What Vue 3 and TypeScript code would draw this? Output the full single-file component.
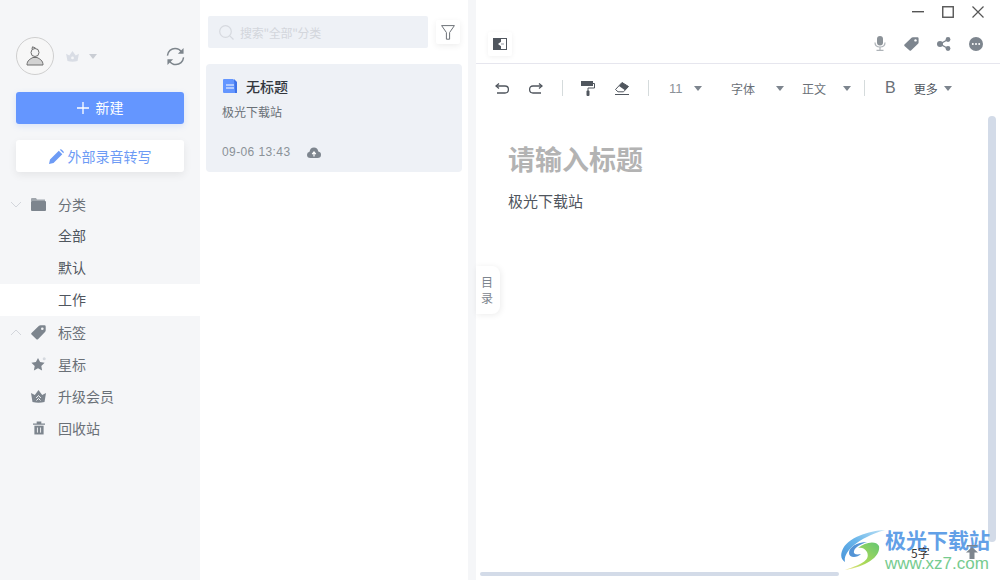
<script setup lang="ts">
// 笔记主界面：左侧分类、中间笔记列表、右侧编辑器
interface NavItem {
  label: string
  icon?: string
  arrow?: 'down' | 'up'
  active?: boolean
  child?: boolean
}

const navItems: NavItem[] = [
  { label: '分类', icon: 'folder', arrow: 'down' },
  { label: '全部', child: true },
  { label: '默认', child: true },
  { label: '工作', child: true, active: true },
  { label: '标签', icon: 'tag', arrow: 'up' },
  { label: '星标', icon: 'star' },
  { label: '升级会员', icon: 'crown' },
  { label: '回收站', icon: 'trash' },
]
</script>

<template>
  <div class="app">
    <aside class="sidebar">
      <div class="user-row">
        <div class="avatar">
          <svg width="18" height="20" viewBox="0 0 18 20">
            <circle cx="9" cy="6.5" r="4" fill="#f4f4f4" stroke="#6e6e6e" stroke-width="1" />
            <path d="M6 3 L6.5 0.8 L9.5 2" fill="none" stroke="#6e6e6e" stroke-width="1" />
            <path d="M1 19 C1 14.5 4 13 7 11.5 L11 11.5 C14 13 17 14.5 17 19 Z" fill="#d2d2d2" stroke="#6e6e6e" stroke-width="1" />
          </svg>
        </div>
        <svg class="vip" width="13" height="11" viewBox="0 0 14 12">
          <path d="M0 3 L3.5 5 L7 0 L10.5 5 L14 3 L12.5 11 Q7 12.5 1.5 11 Z" fill="#d9dde5" />
          <circle cx="7" cy="7.5" r="1.5" fill="#f5f6f8" />
        </svg>
        <span class="caret vip-caret"></span>
        <svg class="sync" width="19" height="19" viewBox="0 0 20 20" fill="none" stroke="#7d858c" stroke-width="1.5">
          <path d="M1.5 9 C2 4.5 5.5 1.5 9.5 1.5 C12.5 1.5 15 3 16.5 5.5" />
          <path d="M18.5 11 C18 15.5 14.5 18.5 10.5 18.5 C7.5 18.5 5 17 3.5 14.5" />
          <path d="M18.5 1 V7 H12.5 Z" fill="#7d858c" stroke="none" />
          <path d="M1.5 19 V13 H7.5 Z" fill="#7d858c" stroke="none" />
        </svg>
      </div>

      <button class="btn-new">
        <svg width="12" height="12" viewBox="0 0 12 12"><path d="M6 0 V12 M0 6 H12" stroke="#fff" stroke-width="1.3" /></svg>
        <span class="btn-new-label">新建</span>
      </button>
      <button class="btn-transcribe">
        <svg width="15" height="15" viewBox="0 0 15 15"><path d="M0 15 L1 10.5 L9.8 1.7 L13.3 5.2 L4.5 14 Z M10.8 0.7 Q11.8 -0.2 12.8 0.7 L14.3 2.2 Q15.2 3.2 14.3 4.2 Z" fill="#6d9bf5" /></svg>
        <span>外部录音转写</span>
      </button>

      <nav class="nav">
        <div v-for="item in navItems" :key="item.label" class="nav-row" :class="{ active: item.active, child: item.child }">
          <span class="nav-arrow">
            <svg v-if="item.arrow === 'down'" width="12" height="7" viewBox="0 0 12 7"><path d="M1 1 L6 6 L11 1" fill="none" stroke="#d3d6dc" /></svg>
            <svg v-if="item.arrow === 'up'" width="12" height="7" viewBox="0 0 12 7"><path d="M1 6 L6 1 L11 6" fill="none" stroke="#d3d6dc" /></svg>
          </span>
          <span class="nav-icon">
            <svg v-if="item.icon === 'folder'" width="15" height="13" viewBox="0 0 15 13">
              <path d="M0 1 Q0 0 1 0 H5 L6 1.5 H14 V3 H0 Z" fill="#a0a6ad" />
              <rect x="0" y="3" width="15" height="10" rx="1" fill="#7d858e" />
            </svg>
            <svg v-if="item.icon === 'tag'" width="15" height="15" viewBox="0 0 15 15">
              <path d="M0.5 8 L8 0.8 Q8.6 0.3 9.5 0.3 H13.5 Q14.7 0.3 14.7 1.5 V5.5 Q14.7 6.4 14 7 L7 14.2 Q6.2 15 5.4 14.2 L0.5 9.5 Q-0.2 8.8 0.5 8 Z" fill="#7d858e" />
              <circle cx="11.3" cy="3.7" r="1.3" fill="#f5f6f8" />
            </svg>
            <svg v-if="item.icon === 'star'" width="15" height="14" viewBox="0 0 15 14">
              <path d="M7 1 L9.1 5 L13.6 5.7 L10.3 8.9 L11.1 13.4 L7 11.2 L2.9 13.4 L3.7 8.9 L0.4 5.7 L4.9 5 Z" fill="#7d858e" />
              <circle cx="13.2" cy="1.8" r="1.5" fill="#d5d9df" />
            </svg>
            <svg v-if="item.icon === 'crown'" width="15" height="13" viewBox="0 0 15 13">
              <path d="M0 3 L3.8 5 L7.5 0 L11.2 5 L15 3 L13.5 12 Q7.5 13.5 1.5 12 Z" fill="#7d858e" />
              <path d="M5.2 8 L7.5 5.5 L9.8 8 M5.5 10.5 L7.5 8.5 L9.5 10.5" fill="none" stroke="#f5f6f8" />
            </svg>
            <svg v-if="item.icon === 'trash'" width="12" height="14" viewBox="0 0 13 14">
              <path d="M0 2 H13 V3.5 H0 Z M4 0 H9 V2 H4 Z" fill="#7d858e" />
              <path d="M1.5 4.5 H11.5 V14 H1.5 Z" fill="#7d858e" />
              <path d="M4.8 6.5 V12 M8.2 6.5 V12" stroke="#f5f6f8" stroke-width="1" />
            </svg>
          </span>
          <span class="nav-label">{{ item.label }}</span>
        </div>
      </nav>
    </aside>

    <section class="list">
      <div class="search-row">
        <div class="search">
          <svg width="15" height="15" viewBox="0 0 15 15" fill="none" stroke="#d6d9df" stroke-width="1.2">
            <circle cx="6.5" cy="6.5" r="5.8" />
            <path d="M10.8 10.8 L14.5 14.5" />
          </svg>
          <span>搜索"全部"分类</span>
        </div>
        <div class="filter">
          <svg width="14" height="15" viewBox="0 0 14 15"><path d="M0.6 0.6 H13.4 L8.6 7.5 V14.2 H5.4 V7.5 Z" fill="none" stroke="#6d7278" /></svg>
        </div>
      </div>
      <article class="card">
        <div class="card-title">
          <svg width="14" height="14" viewBox="0 0 14 14">
            <path d="M1 0 H10 L14 3.5 V14 H1 Q0 14 0 13 V1 Q0 0 1 0 Z" fill="#6496ff" />
            <path d="M11 0 L14 3 V14 H12 Z" fill="#3f73e8" />
            <path d="M3 6 H11 M3 9 H11" stroke="#fff" stroke-width="1" />
          </svg>
          <span>无标题</span>
        </div>
        <p class="card-text">极光下载站</p>
        <div class="card-foot">
          <span>09-06 13:43</span>
          <svg width="14" height="11" viewBox="0 0 14 11">
            <path d="M3.5 11 Q0 11 0 7.8 Q0 5.2 2.5 4.8 Q3.2 0.5 7 0.5 Q10.6 0.5 11.3 4.5 Q14 5 14 7.8 Q14 11 10.5 11 Z" fill="#7d858e" />
            <path d="M7 9.5 V6 M5.2 7.2 L7 5 L8.8 7.2" fill="none" stroke="#fff" stroke-width="1.2" />
          </svg>
        </div>
      </article>
    </section>

    <div class="gutter"></div>

    <main class="editor">
      <div class="win-bar">
        <svg width="12" height="2" viewBox="0 0 12 2"><rect width="12" height="1.4" fill="#555" /></svg>
        <svg width="12" height="12" viewBox="0 0 12 12"><rect x="0.75" y="0.75" width="10.5" height="10.5" fill="none" stroke="#555" stroke-width="1.4" /></svg>
        <svg width="12" height="12" viewBox="0 0 12 12"><path d="M0.5 0.5 L11.5 11.5 M11.5 0.5 L0.5 11.5" stroke="#555" stroke-width="1.2" /></svg>
      </div>
      <div class="action-bar">
        <div class="collapse">
          <svg width="14" height="12" viewBox="0 0 14 12">
            <rect x="0.5" y="0.5" width="13" height="11" fill="#fff" stroke="#50565e" />
            <rect width="8" height="12" fill="#50565e" />
            <path d="M5 6 L9 3 V9 Z" fill="#fff" />
            <rect x="8" y="5" width="3" height="2" fill="#c9ccd0" />
          </svg>
        </div>
        <div class="actions">
          <svg width="12" height="15" viewBox="0 0 12 15">
            <rect x="3" y="0" width="6" height="9.5" rx="3" fill="#8b9298" />
            <path d="M1 6.5 Q1 11 6 11 Q11 11 11 6.5 M6 11 V14 M2.5 14.4 H9.5" fill="none" stroke="#aeb3b8" stroke-width="1.2" />
          </svg>
          <svg width="15" height="14" viewBox="0 0 15 14">
            <path d="M0.5 7.5 L7.5 0.8 Q8 0.3 8.8 0.3 H13.5 Q14.6 0.3 14.6 1.4 V5.5 Q14.6 6.3 14 6.8 L7 13.4 Q6.3 14 5.6 13.4 L0.5 8.9 Q-0.1 8.2 0.5 7.5 Z" fill="#7d858e" />
            <circle cx="11.5" cy="3.4" r="1.2" fill="#fff" />
          </svg>
          <svg width="14" height="14" viewBox="0 0 14 14">
            <path d="M11 2.5 L3 7 L11 11.5" fill="none" stroke="#7d858e" stroke-width="1.4" />
            <circle cx="3" cy="7" r="3" fill="#7d858e" />
            <circle cx="11" cy="2.5" r="2.4" fill="#7d858e" />
            <circle cx="11" cy="11.5" r="2.4" fill="#7d858e" />
          </svg>
          <svg width="14" height="14" viewBox="0 0 14 14">
            <circle cx="7" cy="7" r="7" fill="#7d858e" />
            <circle cx="3.8" cy="7" r="1" fill="#fff" />
            <circle cx="7" cy="7" r="1" fill="#fff" />
            <circle cx="10.2" cy="7" r="1" fill="#fff" />
          </svg>
        </div>
      </div>

      <div class="toolbar">
        <svg class="t-undo" width="14" height="11" viewBox="0 0 14 11" fill="none" stroke="#50565e" stroke-width="1.3">
          <path d="M1 3 H10 Q13.4 3 13.4 6.5 Q13.4 10 10 10 H2" />
          <path d="M4 0.5 L1 3 L4 5.5" />
        </svg>
        <svg class="t-redo" width="14" height="11" viewBox="0 0 14 11" fill="none" stroke="#50565e" stroke-width="1.3">
          <path d="M13 3 H4 Q0.6 3 0.6 6.5 Q0.6 10 4 10 H12" />
          <path d="M10 0.5 L13 3 L10 5.5" />
        </svg>
        <i class="sep sep-a"></i>
        <svg class="t-roller" width="14" height="15" viewBox="0 0 14 15">
          <rect x="0" y="0" width="12" height="5" fill="#50565e" />
          <path d="M12 2.5 H13.5 V7 H7 V10" fill="none" stroke="#50565e" />
          <rect x="5.5" y="9.5" width="3" height="5.5" rx="1" fill="#50565e" />
        </svg>
        <svg class="t-eraser" width="14" height="14" viewBox="0 0 14 14">
          <path d="M0.5 8.5 L7 1.5 L13.5 5.5 L8.5 10.8 H3 Z" fill="#fff" stroke="#50565e" />
          <path d="M4 5 L7 1.5 L13.5 5.5 L10 9.2 Z" fill="#50565e" />
          <rect y="13" width="14" height="1" fill="#50565e" />
        </svg>
        <i class="sep sep-b"></i>
        <span class="t-text t-size">11</span><span class="caret c-size"></span>
        <span class="t-text t-font">字体</span><span class="caret c-font"></span>
        <span class="t-text t-style">正文</span><span class="caret c-style"></span>
        <i class="sep sep-c"></i>
        <span class="t-bold">B</span>
        <span class="t-text t-more">更多</span><span class="caret c-more"></span>
      </div>

      <div class="doc">
        <h1>请输入标题</h1>
        <p>极光下载站</p>
      </div>

      <div class="toc">目<br />录</div>
      <div class="scroll-v"></div>
      <div class="scroll-h"></div>
      <div class="count">5字</div>
      <svg class="to-top" width="12" height="14" viewBox="0 0 12 14"><path d="M1 0 H11 V1.4 H1 Z M6 2 L12 7.5 H8.5 V14 H3.5 V7.5 H0 Z" fill="#7d858e" /></svg>
    </main>

    <div class="watermark">
      <svg width="46" height="42" viewBox="0 0 46 42">
        <defs>
          <linearGradient id="wm-blue" x1="1" y1="0" x2="0" y2="1">
            <stop offset="0" stop-color="#b9dff5" />
            <stop offset="0.5" stop-color="#62b3ea" />
            <stop offset="1" stop-color="#3f8fd8" />
          </linearGradient>
          <linearGradient id="wm-green" x1="1" y1="0" x2="0" y2="1">
            <stop offset="0" stop-color="#5cc46c" />
            <stop offset="0.6" stop-color="#a8d84f" />
            <stop offset="1" stop-color="#f1e68a" />
          </linearGradient>
        </defs>
        <path d="M44 1 C28 2 6 8 1 22 C-1 28 1 31 4 33 C2 24 14 10 44 1 Z" fill="url(#wm-blue)" />
        <path d="M26 13 C16 13 8 18 8 24 C8 29 16 29 20 25 C15 26 12 25 13 22 C14 18 20 15 26 13 Z" fill="#4a8fd4" />
        <path d="M38 17 C40 28 24 38 4 41 C18 36 30 32 26 23 C24 19 20 18 17 19 C24 13 35 11 38 17 Z" fill="url(#wm-green)" />
      </svg>
      <div class="wm-text">
        <div class="wm-cn">极光下载站</div>
        <div class="wm-url">www.xz7.com</div>
      </div>
    </div>
  </div>
</template>

<style>
body {
  margin: 0;
  overflow: hidden;
}
</style>

<style scoped>
.app {
  position: relative;
  display: flex;
  width: 1000px;
  height: 580px;
  overflow: hidden;
  background: #fff;
  font-family: "Noto Sans CJK SC", "Liberation Sans", sans-serif;
  color: #50565e;
}

/* 左侧栏 */
.sidebar {
  width: 200px;
  flex: none;
  padding-top: 37px;
  box-sizing: border-box;
  background: #f5f6f8;
}

.user-row {
  display: flex;
  align-items: center;
  height: 38px;
  padding: 0 15px 0 16px;
}

.avatar {
  width: 38px;
  height: 38px;
  box-sizing: border-box;
  border: 1px solid #cfcfcf;
  border-radius: 50%;
  background: #f7f7f7;
  display: flex;
  align-items: center;
  justify-content: center;
}

.vip {
  margin-left: 12px;
}

.caret {
  display: inline-block;
  width: 0;
  height: 0;
  border-left: 4.5px solid transparent;
  border-right: 4.5px solid transparent;
  border-top: 5px solid #7d858e;
}

.vip-caret {
  margin-left: 10px;
  border-top-color: #c9cdd4;
}

.sync {
  margin-left: auto;
}

.btn-new,
.btn-transcribe {
  display: flex;
  align-items: center;
  justify-content: center;
  width: 168px;
  height: 32px;
  margin-left: 16px;
  border: none;
  border-radius: 3px;
  font: inherit;
  font-size: 14px;
}

.btn-new {
  gap: 7px;
  margin-top: 17px;
  color: #fff;
  background: #6496ff;
  box-shadow: 0 2px 6px rgba(100, 150, 255, 0.2);
}

.btn-new-label {
  padding-bottom: 2px;
}

.btn-transcribe {
  gap: 4px;
  margin-top: 16px;
  color: #6d9bf5;
  background: #fff;
  box-shadow: 0 3px 8px rgba(0, 0, 0, 0.07);
}

.nav {
  margin-top: 16px;
}

.nav-row {
  display: flex;
  align-items: center;
  height: 32px;
  font-size: 14px;
  color: #6a7077;
}

.nav-row.child {
  color: #50565e;
}

.nav-row.child .nav-label {
  padding-bottom: 2px;
}

.nav-row.active {
  background: #fff;
}

.nav-arrow {
  width: 12px;
  margin-left: 10px;
  display: flex;
}

.nav-icon {
  width: 15px;
  margin-left: 9px;
  margin-right: 12px;
  display: flex;
  justify-content: center;
}

/* 笔记列表 */
.list {
  width: 268px;
  flex: none;
  box-sizing: border-box;
  padding: 16px 6px 0;
}

.search-row {
  display: flex;
  align-items: center;
  gap: 8px;
  padding-left: 2px;
}

.search {
  display: flex;
  align-items: center;
  gap: 6px;
  width: 220px;
  height: 32px;
  box-sizing: border-box;
  padding-left: 11px;
  border-radius: 2px;
  background: #eef1f6;
  font-size: 12px;
  letter-spacing: -0.3px;
  color: #d3d6dc;
}

.filter {
  display: flex;
  align-items: center;
  justify-content: center;
  width: 24px;
  height: 24px;
  border-radius: 2px;
  background: #fff;
  box-shadow: 0 2px 6px rgba(0, 0, 0, 0.07);
}

.card {
  height: 108px;
  box-sizing: border-box;
  margin-top: 16px;
  padding: 13px 16px 0 17px;
  border-radius: 4px;
  background: #eef1f6;
}

.card-title {
  display: flex;
  align-items: center;
  gap: 9px;
  height: 18px;
  font-size: 14px;
  font-weight: 500;
  color: #33373d;
}

.card-text {
  margin: 8px 0 0 -1px;
  height: 18px;
  line-height: 18px;
  font-size: 12px;
  color: #6a7077;
}

.card-foot {
  display: flex;
  align-items: center;
  gap: 17px;
  margin: 22px 0 0 -1px;
  height: 18px;
  font-family: "Liberation Sans", sans-serif;
  font-size: 12px;
  letter-spacing: 0.4px;
  color: #8b9298;
}

.gutter {
  width: 8px;
  flex: none;
  background: #f5f6f8;
}

/* 编辑器 */
.editor {
  position: relative;
  flex: 1;
  min-width: 0;
}

.win-bar {
  display: flex;
  align-items: center;
  justify-content: flex-end;
  gap: 18px;
  height: 24px;
  padding-right: 16px;
}

.action-bar {
  display: flex;
  align-items: center;
  justify-content: space-between;
  height: 39px;
  padding: 0 17px 0 12px;
  border-bottom: 1px solid #e6e6ee;
}

.collapse {
  display: flex;
  align-items: center;
  justify-content: center;
  width: 24px;
  height: 24px;
  background: #fff;
  box-shadow: 0 1px 5px rgba(0, 0, 0, 0.06);
  border-radius: 2px;
}

.actions {
  display: flex;
  align-items: center;
  gap: 18px;
}

.toolbar {
  display: flex;
  align-items: center;
  height: 48px;
  padding-left: 19px;
}

.toolbar > * {
  flex: none;
}

.t-redo { margin-left: 20px; }
.sep {
  width: 1px;
  height: 16px;
  background: #d5dbdc;
}
.sep-a { margin-left: 19px; }
.t-roller { margin-left: 18px; }
.t-eraser { margin-left: 20px; }
.sep-b { margin-left: 19px; }

.t-text {
  font-size: 12px;
  color: #6a7077;
}
.t-size {
  margin-left: 20px;
  width: 14px;
  font-family: "Liberation Sans", sans-serif;
  font-size: 13px;
  color: #8b9298;
}
.c-size { margin-left: 11px; }
.t-font { margin-left: 29px; }
.c-font { margin-left: 21px; }
.t-style { margin-left: 18px; }
.c-style { margin-left: 17px; }
.sep-c { margin-left: 13px; }
.t-bold {
  margin-left: 20px;
  font-family: "Liberation Sans", sans-serif;
  font-size: 16px;
  color: #6a7077;
}
.t-more {
  margin-left: 18px;
  color: #50565e;
}
.c-more { margin-left: 6px; }

.doc {
  padding: 31px 32px 0;
}

.doc h1 {
  margin: 0;
  height: 32px;
  line-height: 32px;
  font-size: 27px;
  font-weight: 700;
  color: #b3b3b3;
}

.doc p {
  margin: 15px 0 0;
  line-height: 22px;
  font-size: 15px;
  color: #50565e;
}

/* 浮层 */
.toc {
  position: absolute;
  left: 0;
  top: 266px;
  width: 24px;
  height: 48px;
  box-sizing: border-box;
  padding: 8px 2px 0 0;
  border-radius: 0 8px 8px 0;
  background: #fff;
  box-shadow: 1px 1px 6px rgba(0, 0, 0, 0.08);
  font-size: 12px;
  line-height: 16px;
  text-align: center;
  color: #7d858e;
}

.scroll-v {
  position: absolute;
  left: 512px;
  top: 116px;
  width: 8px;
  height: 426px;
  border-radius: 4px;
  background: #d3dbe8;
}

.scroll-h {
  position: absolute;
  left: 4px;
  top: 572px;
  width: 359px;
  height: 4px;
  border-radius: 2px;
  background: #d3dbe8;
}

.count {
  position: absolute;
  left: 435px;
  top: 544px;
  font-size: 12px;
  color: #333;
  z-index: 2;
}

.to-top {
  position: absolute;
  left: 490px;
  top: 545px;
  z-index: 2;
}

.watermark {
  position: absolute;
  left: 841px;
  top: 529px;
  display: flex;
  opacity: 0.95;
}

.wm-text {
  margin-left: -2px;
  margin-top: -2px;
}

.wm-cn {
  font-size: 21px;
  line-height: 25px;
  font-weight: 700;
  color: #5a9be6;
  white-space: nowrap;
}

.wm-url {
  margin-top: 2px;
  font-family: "Liberation Sans", sans-serif;
  font-size: 17px;
  line-height: 20px;
  color: #6fc98a;
  white-space: nowrap;
}
</style>
